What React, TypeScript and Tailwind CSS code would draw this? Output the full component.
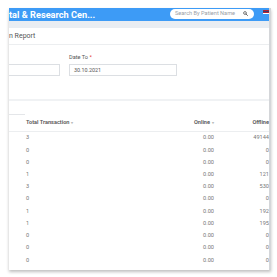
import React from "react";

const rows = [
  { total: "3", online: "0.00", offline: "49144" },
  { total: "0", online: "0.00", offline: "0" },
  { total: "0", online: "0.00", offline: "0" },
  { total: "1", online: "0.00", offline: "121" },
  { total: "3", online: "0.00", offline: "530" },
  { total: "0", online: "0.00", offline: "0" },
  { total: "1", online: "0.00", offline: "192" },
  { total: "1", online: "0.00", offline: "195" },
  { total: "0", online: "0.00", offline: "0" },
  { total: "0", online: "0.00", offline: "0" },
  { total: "0", online: "0.00", offline: "0" },
];

function SortArrow() {
  return <span className="ml-[2px] text-[4px] text-[#bbb]">▾</span>;
}

export default function App() {
  return (
    <div className="w-[277px] h-[277px] bg-white overflow-hidden pt-[8px] pl-[9px] font-['Roboto',sans-serif]">
      <div className="w-[262px] h-[262px] overflow-hidden bg-white border-r-2 border-[#d4d6d9] shadow-[0_2px_3px_rgba(0,0,0,0.25)] flex flex-col">
        {/* Top bar */}
        <div className="h-[13px] shrink-0 bg-[#3d9bf6] flex items-center">
          <span className="text-white font-bold text-[9.2px] leading-none whitespace-nowrap">
            tal &amp; Research Cen...
          </span>
          <div className="ml-auto w-[84px] h-[10px] -mt-[2px] bg-white rounded-full flex items-center pl-[5px] pr-[6px]">
            <span className="text-[5.6px] text-[#9aa0a6] leading-none whitespace-nowrap">Search By Patient Name</span>
            <svg viewBox="0 0 10 10" className="ml-auto w-[5px] h-[5px]">
              <circle cx="4" cy="4" r="2.8" fill="none" stroke="#444" strokeWidth="1.4" />
              <path d="M6 6 L9 9" stroke="#444" strokeWidth="1.6" strokeLinecap="round" />
            </svg>
          </div>
          <div className="ml-[9px] w-[6px] h-[4px] -mt-[6px] flex flex-col">
            <div className="h-[1px] bg-[#b22234]" />
            <div className="h-[1px] bg-[#3c3b6e]" />
            <div className="h-[1px] bg-[#b22234]" />
            <div className="h-[1px] bg-white" />
          </div>
        </div>
        <div className="h-[7px] shrink-0 bg-[#e9edf2]" />

        {/* Page title */}
        <div className="h-[17px] shrink-0 flex items-center border-b border-[#eceef0]">
          <span className="text-[7px] text-[#555] leading-none">n Report</span>
        </div>

        {/* Filters */}
        <div className="h-[54px] shrink-0 flex gap-[9px] pt-[8px]">
          <div className="w-[51px] flex flex-col">
            <div className="h-[8px]" />
            <div className="mt-[3px] h-[12px] border border-l-0 border-[#dcdfe3]" />
          </div>
          <div className="w-[108px] flex flex-col">
            <div className="h-[8px] text-[5.6px] text-[#555] leading-[8px]">
              Date To <span className="text-[#e53935]">*</span>
            </div>
            <div className="mt-[3px] h-[12px] border border-[#dcdfe3] flex items-center pl-[4px] text-[5.4px] text-[#555]">
              30.10.2021
            </div>
          </div>
        </div>
        <div className="h-[2px] shrink-0 bg-[#f0f2f4]" />

        {/* Tabs */}
        <div className="h-[14px] shrink-0 flex items-end">
          <div className="w-[16px] h-[1px] bg-[#e4e6e9]" />
        </div>

        {/* Table */}
        <div className="w-[260px] text-[5.6px] leading-none">
          <div className="h-[17px] flex items-center border-b border-[#eceef0] pl-[17px] font-semibold text-[#555]">
            <div className="flex-1 flex items-center">
              Total Transaction
              <SortArrow />
            </div>
            <div className="w-[40px] flex items-center justify-end">
              Online
              <SortArrow />
            </div>
            <div className="w-[55px] flex items-center justify-end">Offline</div>
          </div>
          <div>
            {rows.map((r, i) => (
              <div key={i} className="h-[12.23px] flex items-center pl-[17px] text-[#777]">
                <div className="flex-1">{r.total}</div>
                <div className="w-[40px] text-right pr-[0px]">{r.online}</div>
                <div className="w-[55px] text-right">{r.offline}</div>
              </div>
            ))}
          </div>
        </div>
      </div>
    </div>
  );
}
